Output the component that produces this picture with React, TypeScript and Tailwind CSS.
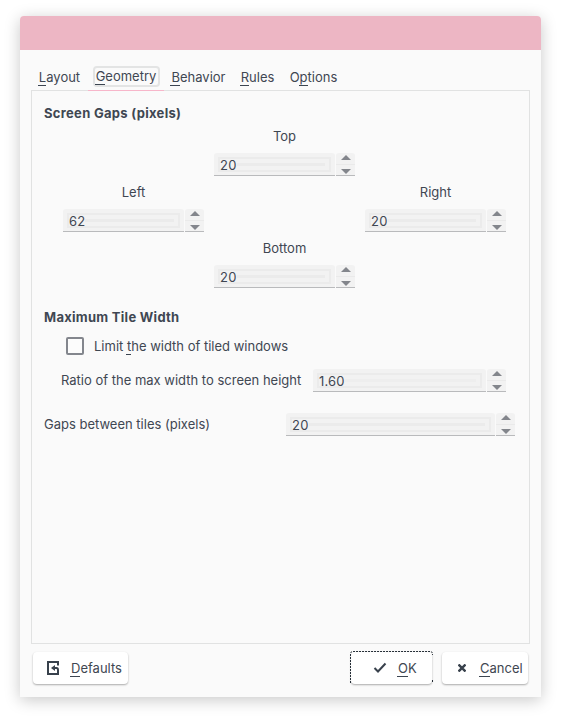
import type { ReactNode } from 'react';

function Key({ children, wide }: { children: ReactNode; wide?: boolean }) {
  return (
    <span
      className={`relative after:absolute after:top-4 after:h-px after:bg-[#3b4450] after:content-[''] ${
        wide ? 'after:-left-px after:right-0' : 'after:-left-px after:right-0'
      }`}
    >
      {children}
    </span>
  );
}

function Spin({ value, width, faint }: { value: string; width: string; faint?: boolean }) {
  return (
    <div className="flex h-[23px] gap-px">
      <div className={`${width} rounded-t-[3px] border-b border-[#b9babc] bg-[#f2f2f2] px-1 pt-1`}>
        <div className="flex h-[15px] items-center border-2 border-[#ebebeb] pr-1">
          <span className="mt-px leading-4 tracking-[0.2px]">{value}</span>
          <div className={`h-[3px] flex-1 ${faint ? 'bg-[#eeeeee]' : 'bg-[#ebebeb]'}`} />
        </div>
      </div>
      <div className="flex w-[19px] flex-col items-center rounded-t-[3px] border-b border-[#b9babc] bg-[#f2f2f2]">
        <div className="flex h-[11px] w-full justify-center pt-[2px]">
          <svg width="10" height="5" viewBox="0 0 10 5" fill="#83868c"><path d="M0 5 5 0 10 5Z" /></svg>
        </div>
        <div className="flex w-full flex-1 justify-center border-t border-[#eaeaea] pt-1">
          <svg width="10" height="5" viewBox="0 0 10 5" fill="#83868c"><path d="M0 0 5 5 10 0Z" /></svg>
        </div>
      </div>
    </div>
  );
}

function Field({ label, value }: { label: string; value: string }) {
  return (
    <div className="flex w-[141px] flex-col items-center">
      <div className="h-[25px] leading-4">{label}</div>
      <Spin value={value} width="w-[121px]" />
    </div>
  );
}

const button = 'flex h-8 items-center rounded-[4px] bg-white shadow-[0_1px_2px_rgba(0,0,0,0.32)]';

export default function App() {
  return (
    <div className="h-[721px] w-[561px] overflow-hidden bg-white px-5 pt-4 font-['Inter',sans-serif] text-[13px] leading-4 whitespace-nowrap text-[#3f4752]">
      <div className="flex h-[681px] w-[521px] flex-col rounded-t-[4px] bg-[#fafafa] shadow-[0_3px_16px_rgba(0,0,0,0.22)]">
        <div className="h-[34px] shrink-0 rounded-t-[4px] bg-[#edb6c4]" />

        <div className="flex h-10 items-end pl-[11px]">
          <div className="flex h-[21px] w-[57px] justify-center"><span><Key>L</Key>ayout</span></div>
          <div className="z-10 -mb-px flex h-[25px] w-[76px] justify-center border-b border-[#f7b6ca]">
            <div className="flex h-[21px] w-[67px] justify-center rounded-[4px] border-2 border-[#e3e4e4]">
              <span><Key wide>G</Key>eometry</span>
            </div>
          </div>
          <div className="flex h-[21px] w-[69px] justify-center"><span><Key>B</Key>ehavior</span></div>
          <div className="flex h-[21px] w-[49px] justify-center"><span><Key>R</Key>ules</span></div>
          <div className="flex h-[21px] w-[63px] justify-center"><span>O<Key>p</Key>tions</span></div>
        </div>

        <div className="ml-[11px] h-[554px] w-[499px] shrink-0 border border-[#e1e2e2] px-3 pt-[14px]">
          <h2 className="h-[23px] font-bold tracking-[0.3px]">Screen Gaps (pixels)</h2>
          <div className="flex h-14 pl-[170px]"><Field label="Top" value="20" /></div>
          <div className="flex h-14 justify-between pr-[11px] pl-[19px]">
            <Field label="Left" value="62" />
            <Field label="Right" value="20" />
          </div>
          <div className="flex h-[69px] pl-[170px]"><Field label="Bottom" value="20" /></div>

          <h2 className="h-[27px] font-bold tracking-[0.28px]">Maximum Tile Width</h2>
          <div className="flex h-[33px] pl-[22px]">
            <span className="mt-px mr-[10px] size-[18px] rounded-[2px] border-2 border-[#83868d] bg-[#fcfcfc]" />
            <span className="pt-[2px]">Limit <Key>t</Key>he width of tiled windows</span>
          </div>
          <div className="flex h-11 pl-[17px]">
            <div className="w-[252px] pt-[3px]">Ratio of the max width to screen height</div>
            <Spin value="1.60" width="w-[173px]" faint />
          </div>
          <div className="flex">
            <div className="w-[242px] pt-[3px]">Gaps between tiles (pixels)</div>
            <Spin value="20" width="w-[209px]" />
          </div>
        </div>

        <div className="flex pt-2 pr-[13px] pl-[13px]">
          <button className={`${button} w-[95px] pl-[14px]`}>
            <svg width="12" height="14" viewBox="0 0 12 14" fill="none" stroke="#38414c">
              <path d="M11 4.5V1H1V13H11V9" strokeWidth="2" />
              <path d="M7 7H9.5Q11 7 11 9V11" strokeWidth="2" />
              <path d="M4 7 8 4V10Z" fill="#38414c" stroke="none" />
            </svg>
            <span className="ml-3"><Key>D</Key>efaults</span>
          </button>
          <button className={`${button} relative ml-auto w-[81px] pl-[22px]`}>
            <svg className="absolute -top-px -left-px" width="83" height="34" viewBox="0 0 83 34" fill="none" stroke="#252d36" strokeDasharray="2 1">
              <path d="M.5 32V3Q.5 .5 3 .5H80Q82.5 .5 82.5 3V4M82.5 29V32" />
            </svg>
            <svg width="14" height="12" viewBox="0 0 14 12" fill="none" stroke="#38414c" strokeWidth="2"><path d="M1.5 6 5 9.5 12.5 1.5" /></svg>
            <span className="ml-[11px]"><Key wide>O</Key>K</span>
          </button>
          <button className={`${button} ml-[10px] w-[86px] pl-4`}>
            <svg width="8" height="8" viewBox="0 0 8 8" fill="none" stroke="#38414c" strokeWidth="2.4"><path d="m.5.5 7 7M7.5.5l-7 7" /></svg>
            <span className="ml-[14px]"><Key>C</Key>ancel</span>
          </button>
        </div>
      </div>
    </div>
  );
}
